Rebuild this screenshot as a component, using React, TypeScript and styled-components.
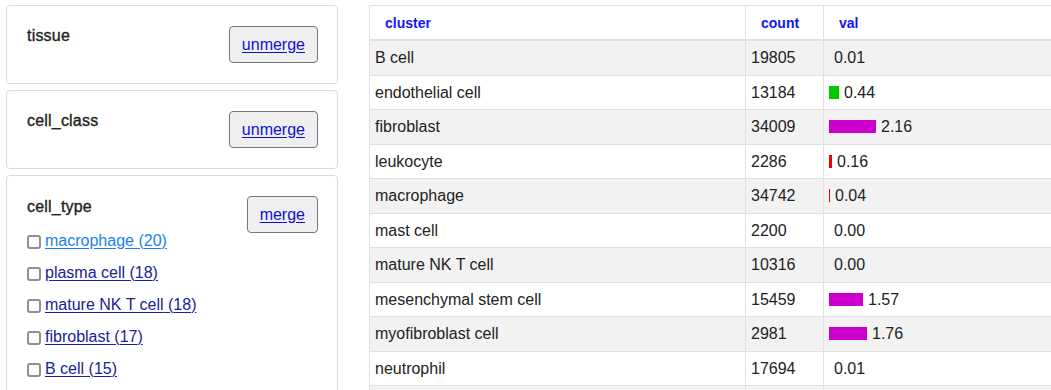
import React from "react";
import styled, { createGlobalStyle } from "styled-components";

const GlobalStyle = createGlobalStyle`
  html, body {
    margin: 0;
    padding: 0;
    background: #fff;
    overflow: hidden;
  }
  body {
    font-family: "Liberation Sans", Arial, sans-serif;
    color: #222;
  }
`;

type Row = {
  cluster: string;
  count: number;
  val: number;
};

const rows: Row[] = [
  { cluster: "B cell", count: 19805, val: 0.01 },
  { cluster: "endothelial cell", count: 13184, val: 0.44 },
  { cluster: "fibroblast", count: 34009, val: 2.16 },
  { cluster: "leukocyte", count: 2286, val: 0.16 },
  { cluster: "macrophage", count: 34742, val: 0.04 },
  { cluster: "mast cell", count: 2200, val: 0.0 },
  { cluster: "mature NK T cell", count: 10316, val: 0.0 },
  { cluster: "mesenchymal stem cell", count: 15459, val: 1.57 },
  { cluster: "myofibroblast cell", count: 2981, val: 1.76 },
  { cluster: "neutrophil", count: 17694, val: 0.01 },
  { cluster: "plasma cell", count: 9120, val: 0.02 },
];

const cellTypes = [
  { name: "macrophage", n: 20, active: true },
  { name: "plasma cell", n: 18 },
  { name: "mature NK T cell", n: 18 },
  { name: "fibroblast", n: 17 },
  { name: "B cell", n: 15 },
];

const Page = styled.div`
  display: flex;
  align-items: flex-start;
  gap: 31px;
  padding: 5px 0 0 6px;
  width: 1200px;
`;

const Sidebar = styled.div`
  width: 332px;
  display: flex;
  flex-direction: column;
  gap: 6px;
  flex-shrink: 0;
`;

const Card = styled.div`
  box-sizing: border-box;
  border: 1px solid #dcdcdc;
  border-radius: 4px;
  padding: 20px 19px 20px 20px;
  display: flex;
  justify-content: space-between;
  align-items: flex-start;
`;

const CardTitle = styled.div<{ $list?: boolean }>`
  font-size: 16px;
  line-height: 18px;
  color: #222;
  -webkit-text-stroke: 0.35px #222;
  letter-spacing: 0.2px;
  margin-top: ${(p) => (p.$list ? "2px" : "1px")};
`;

const MergeButton = styled.button`
  box-sizing: border-box;
  height: 37px;
  padding: 0 12px;
  background: #efefef;
  border: 1px solid #707680;
  border-radius: 4px;
  font-family: "Liberation Sans", Arial, sans-serif;
  font-size: 16px;
  color: #1010d0;
  text-decoration: underline;
  text-underline-offset: 2px;
  cursor: pointer;
`;

const ItemList = styled.ul`
  list-style: none;
  margin: 9px 0 0;
  padding: 0;
`;

const Item = styled.li`
  height: 32px;
  display: flex;
  align-items: center;
  gap: 4px;
`;

const Check = styled.span`
  box-sizing: border-box;
  width: 14px;
  height: 14px;
  border: 2px solid #8f8f98;
  border-radius: 3px;
  background: #fff;
  margin-top: 2px;
`;

const ItemLink = styled.a<{ $active?: boolean }>`
  font-size: 16px;
  line-height: 18px;
  color: ${(p) => (p.$active ? "#1a7ff0" : "#20209a")};
  text-decoration: underline;
  text-underline-offset: 2px;
  cursor: pointer;
`;

const Table = styled.table`
  border-collapse: collapse;
  table-layout: fixed;
  width: 760px;
  flex-shrink: 0;
  border-top: 1px solid #dfe0e4;
  border-left: 1px solid #dfe0e4;
`;

const Th = styled.th`
  text-align: left;
  padding: 8px 15px;
  font-size: 14px;
  line-height: 16px;
  font-weight: bold;
  color: #1515ee;
  border-right: 1px solid #dfe0e4;
  border-bottom: 2px solid #dfe0e4;
  height: 17px;
`;

const Tr = styled.tr<{ $odd: boolean }>`
  background: ${(p) => (p.$odd ? "#f2f2f2" : "#fff")};
`;

const Td = styled.td`
  padding: 8px 6px 8px 5px;
  font-size: 16px;
  line-height: 17.5px;
  color: #222;
  border-right: 1px solid #dfe0e4;
  border-bottom: 1px solid #dfe0e4;
  white-space: nowrap;
`;

const Bar = styled.span<{ $color: string }>`
  display: inline-block;
  height: 13px;
  margin-right: 5px;
  vertical-align: -1px;
  background: ${(p) => p.$color};
`;

function barColor(v: number) {
  if (v >= 1) return "#cc00cc";
  if (v >= 0.3) return "#00cc00";
  return "#ee0000";
}

export default function App() {
  return (
    <>
      <GlobalStyle />
      <Page>
        <Sidebar>
          <Card>
            <CardTitle>tissue</CardTitle>
            <MergeButton>unmerge</MergeButton>
          </Card>
          <Card>
            <CardTitle>cell_class</CardTitle>
            <MergeButton>unmerge</MergeButton>
          </Card>
          <Card>
            <div>
              <CardTitle $list>cell_type</CardTitle>
              <ItemList>
                {cellTypes.map((c) => (
                  <Item key={c.name}>
                    <Check />
                    <ItemLink $active={c.active}>
                      {c.name} ({c.n})
                    </ItemLink>
                  </Item>
                ))}
              </ItemList>
            </div>
            <MergeButton>merge</MergeButton>
          </Card>
        </Sidebar>
        <Table>
          <colgroup>
            <col style={{ width: 376 }} />
            <col style={{ width: 78 }} />
            <col />
          </colgroup>
          <thead>
            <tr>
              <Th>cluster</Th>
              <Th>count</Th>
              <Th>val</Th>
            </tr>
          </thead>
          <tbody>
            {rows.map((r, i) => (
              <Tr key={r.cluster} $odd={i % 2 === 0}>
                <Td>{r.cluster}</Td>
                <Td>{r.count}</Td>
                <Td>
                  <Bar
                    $color={barColor(r.val)}
                    style={{ width: Math.round(r.val * 21.8) }}
                  />
                  {r.val.toFixed(2)}
                </Td>
              </Tr>
            ))}
          </tbody>
        </Table>
      </Page>
    </>
  );
}
